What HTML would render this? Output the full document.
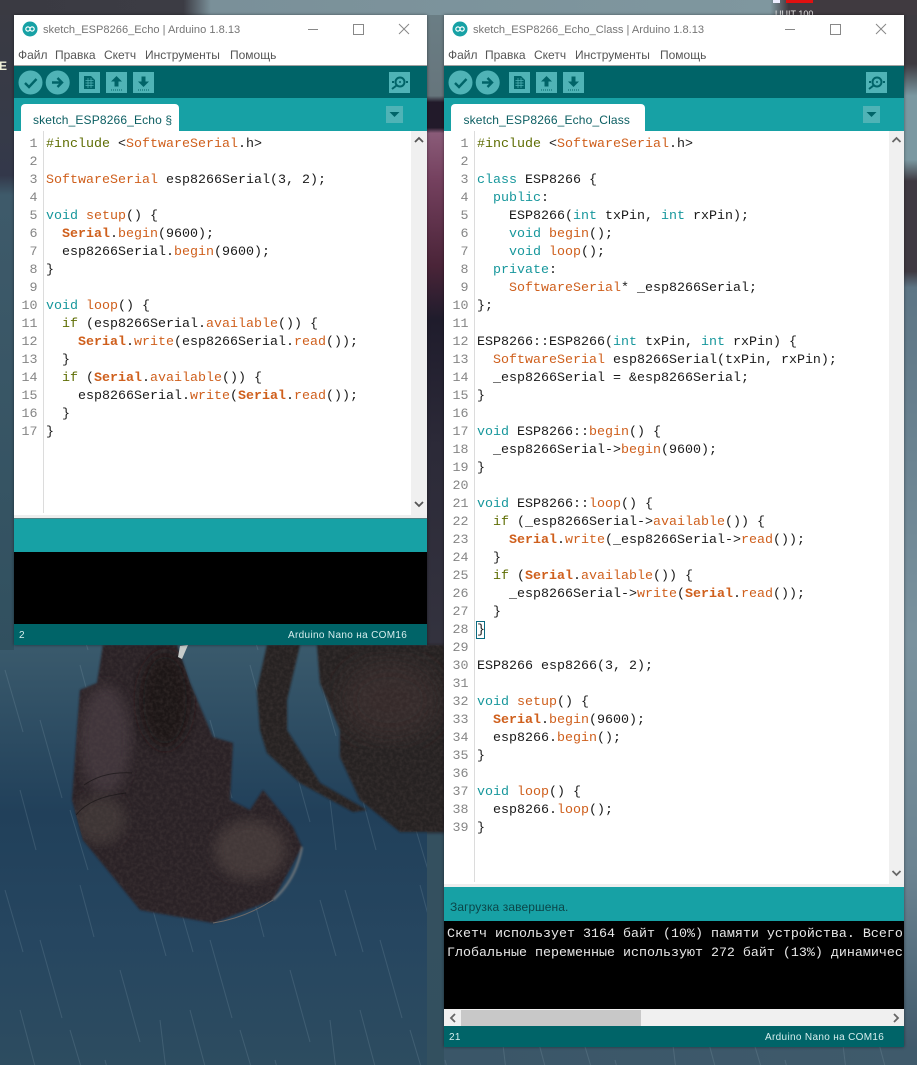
<!DOCTYPE html>
<html><head><meta charset="utf-8"><title>Arduino</title>
<style>
html,body{margin:0;padding:0;width:917px;height:1065px;overflow:hidden;background:#3a5264}
#bg{position:absolute;left:0;top:0}
.a{position:absolute}
.win{position:absolute;background:#fff;box-shadow:0 0 3px rgba(0,0,0,.45);overflow:hidden;font-family:"Liberation Sans",sans-serif;filter:blur(.3px)}
.title{position:absolute;top:8px;font-size:11.1px;line-height:14px;color:#757575;white-space:nowrap}
.menu{position:absolute;top:33px;font-size:12px;line-height:14px;color:#555;white-space:nowrap}
.sep{position:absolute;left:0;right:0;top:50px;height:1px;background:#a2a2a2}
.tb{position:absolute;left:0;right:0;top:51px;height:33px;background:#006468}
.tabbar{position:absolute;left:0;right:0;top:83px;height:33px;background:#17a1a5}
.tab{position:absolute;top:89px;height:27px;background:#fff;border-radius:4px 4px 0 0}
.tabt{position:absolute;top:98px;font-size:12px;line-height:14px;color:#0b5e62;white-space:nowrap;letter-spacing:.15px}
pre{position:absolute;margin:0;font-family:"Liberation Mono",monospace;font-size:13.33px;line-height:18px;color:#1a1a1a;white-space:pre}
.num{color:#858585;text-align:right}
.gut{position:absolute;width:1px;background:#dcdcdc;top:116px}
.sb{position:absolute;top:116px;background:#f0f0f0}
.o{color:#cf5f1c}.t{color:#17979c}.g{color:#5e6d03}.b{color:#cf5f1c;font-weight:bold}
.st{position:absolute;font-size:10px;line-height:12px;color:#d6eeee;letter-spacing:.33px;white-space:nowrap}
svg{position:absolute;overflow:visible}
</style></head><body>
<svg id="bg" width="917" height="1065" viewBox="0 0 917 1065">
<defs>
<linearGradient id="mid" x1="0" y1="0" x2="0" y2="1">
<stop offset="0" stop-color="#6b7f86"/><stop offset=".09" stop-color="#66757c"/><stop offset=".096" stop-color="#221a2a"/><stop offset=".12" stop-color="#221a2a"/><stop offset=".125" stop-color="#8a5b78"/><stop offset=".17" stop-color="#74405e"/><stop offset=".25" stop-color="#4a2438"/><stop offset=".3" stop-color="#1f1c2c"/><stop offset=".42" stop-color="#2c2a38"/><stop offset=".6" stop-color="#33323e"/><stop offset=".775" stop-color="#23242f"/><stop offset=".785" stop-color="#34505f"/><stop offset="1" stop-color="#33505f"/>
</linearGradient>
<linearGradient id="leftS" x1="0" y1="0" x2="0" y2="1">
<stop offset="0" stop-color="#3a3a42"/><stop offset=".2" stop-color="#363a48"/><stop offset=".27" stop-color="#33384a"/><stop offset=".3" stop-color="#3e5a6a"/><stop offset="1" stop-color="#31505f"/>
</linearGradient>
<linearGradient id="rightS" x1="0" y1="0" x2="0" y2="1">
<stop offset="0" stop-color="#3d3a40"/><stop offset=".06" stop-color="#3d3a40"/><stop offset=".09" stop-color="#7b98a1"/><stop offset=".15" stop-color="#7b98a1"/><stop offset=".17" stop-color="#3f3a42"/><stop offset=".255" stop-color="#3f3a42"/><stop offset=".27" stop-color="#5d7585"/><stop offset=".6" stop-color="#7a929e"/><stop offset=".82" stop-color="#6b8391"/><stop offset="1" stop-color="#3c5567"/>
</linearGradient>
<linearGradient id="top" x1="0" y1="0" x2="1" y2="0">
<stop offset="0" stop-color="#3a3a42"/><stop offset=".2" stop-color="#3c3c44"/><stop offset=".23" stop-color="#7a9099"/><stop offset=".84" stop-color="#7f979f"/><stop offset=".86" stop-color="#403a40"/><stop offset="1" stop-color="#403a40"/>
</linearGradient>
<linearGradient id="sea" x1="0" y1="0" x2="0" y2="1">
<stop offset="0" stop-color="#3a5a6c"/><stop offset=".4" stop-color="#21405a"/><stop offset=".7" stop-color="#264660"/><stop offset="1" stop-color="#2d4c60"/>
</linearGradient>
<linearGradient id="botR" x1="0" y1="0" x2="1" y2="0">
<stop offset="0" stop-color="#3a5668"/><stop offset="1" stop-color="#3f5a6b"/>
</linearGradient>
<pattern id="rain" width="170" height="220" patternUnits="userSpaceOnUse">
<g stroke="#a9c3cf" stroke-opacity=".16" stroke-width="1" fill="none">
<path d="M5 10l18 62M40 60l22 78M80 5l14 52M120 90l20 72M150 20l16 56M20 130l16 60M70 150l18 60M105 180l10 38M160 140l6 50"/>
</g>
</pattern>
<filter id="bl"><feGaussianBlur stdDeviation="1"/></filter>
<filter id="bl6"><feGaussianBlur stdDeviation="6"/></filter>
<filter id="bl12"><feGaussianBlur stdDeviation="12"/></filter>
<filter id="grain" x="0" y="0" width="100%" height="100%" color-interpolation-filters="sRGB"><feTurbulence type="fractalNoise" baseFrequency=".3" numOctaves="2" seed="3"/><feColorMatrix values="0 0 0 0 .36 0 0 0 0 .31 0 0 0 0 .3 0 0 0 .55 -.2"/></filter>
<clipPath id="cr"><path d="M103 645L97 683 80 690 72 800 83 840 140 910 213 923 273 900 302 847 293 827 263 790 250 810 230 800 233 743 213 737 190 683 177 645Z"/><path d="M267 645L257 690 260 730 267 753 300 783 353 812 367 810 320 783 287 730 287 700 300 645Z"/><path d="M317 645L320 683 340 730 340 757 360 800 400 832 444 832 444 645Z"/></clipPath>
</defs>
<rect x="0" y="645" width="444" height="420" fill="url(#sea)"/>
<rect x="0" y="645" width="444" height="420" fill="url(#rain)"/>
<rect x="427" y="0" width="17" height="1065" fill="url(#mid)"/>
<rect x="0" y="0" width="14" height="650" fill="url(#leftS)"/>
<rect x="904" y="0" width="13" height="1065" fill="url(#rightS)"/>
<rect x="0" y="0" width="917" height="15" fill="url(#top)"/>
<rect x="444" y="1047" width="473" height="18" fill="url(#botR)"/>
<rect x="444" y="1047" width="473" height="18" fill="url(#rain)"/>
<g filter="url(#bl)">
<path d="M103 645L97 683 80 690 72 800 83 840 140 910 213 923 273 900 302 847 293 827 263 790 250 810 230 800 233 743 213 737 190 683 177 645Z" fill="#2a2427"/>
<path d="M267 645L257 690 260 730 267 753 300 783 353 812 367 810 320 783 287 730 287 700 300 645Z" fill="#272123"/>
<path d="M317 645L320 683 340 730 340 757 360 800 400 832 444 832 444 645Z" fill="#272023"/>
</g>
<g clip-path="url(#cr)">
<ellipse cx="105" cy="740" rx="26" ry="55" fill="#40363a" filter="url(#bl6)"/>
<ellipse cx="100" cy="820" rx="26" ry="24" fill="#3e3436" filter="url(#bl6)"/>
<ellipse cx="250" cy="850" rx="36" ry="30" fill="#423838" filter="url(#bl6)"/>
<ellipse cx="165" cy="700" rx="26" ry="48" fill="#1b1617" filter="url(#bl6)"/>
<ellipse cx="390" cy="700" rx="50" ry="40" fill="#362c2c" filter="url(#bl12)"/>
<rect x="60" y="645" width="384" height="290" filter="url(#grain)"/>
<path d="M84 785q20-14 48-12M76 815q14-18 50-22" fill="none" stroke="#141012" stroke-opacity=".6" stroke-width="1"/>
</g>
<path d="M273 900Q296 880 302 847" fill="none" stroke="#8e8a86" stroke-width="1.5" filter="url(#bl)"/>
<path d="M213 923Q245 918 273 900" fill="none" stroke="#6f6a68" stroke-width="1"/>
<path d="M180 646l8 -1-6 14-4-2z" fill="#c7ccca"/>
<rect x="773" y="0" width="7" height="3" fill="#eef"/><rect x="786" y="0" width="27" height="3" fill="#e01010"/>
<text x="775" y="17" font-family="Liberation Sans" font-size="9" fill="#e6e6e6">UUIT 100</text>
<text x="-1" y="70" font-family="Liberation Sans" font-size="12" font-weight="bold" fill="#f0f0d8">E</text>
</svg>

<!-- LEFT WINDOW -->
<div class="win" style="left:14px;top:15px;width:413px;height:630px">
 <svg style="left:8px;top:6px" width="16" height="16" viewBox="0 0 16 16"><circle cx="8" cy="8" r="7.5" fill="#17a1a5"/><path d="M3.8 8a2 2 0 0 1 4.2 0a2 2 0 0 0 4.2 0a2 2 0 0 0-4.2 0a2 2 0 0 1-4.2 0" fill="none" stroke="#fff" stroke-width="1.2"/></svg>
 <div class="title" style="left:29px">sketch_ESP8266_Echo | Arduino 1.8.13</div>
 <svg style="left:0;top:0" width="413" height="40"><path d="M294 14.5h10" stroke="#888" fill="none"/><rect x="339.5" y="9.5" width="10" height="10" fill="none" stroke="#888"/><path d="M385 9l10 10M395 9l-10 10" stroke="#888" fill="none"/></svg>
 <div class="menu" style="left:4px">Файл</div><div class="menu" style="left:41px">Правка</div><div class="menu" style="left:90px">Скетч</div><div class="menu" style="left:131px">Инструменты</div><div class="menu" style="left:216px">Помощь</div>
 <div class="sep"></div><div class="tb"></div><div class="tabbar"></div>
 <svg style="left:0;top:51px" width="413" height="33">
  <circle cx="16.5" cy="16.5" r="12" fill="#4fb3b6"/><path d="M11 17l4 4 7.5-8" fill="none" stroke="#006468" stroke-width="2.4"/>
  <circle cx="43.7" cy="16.5" r="12" fill="#4fb3b6"/><path d="M38 16.5h9M43.5 12l4.5 4.5-4.5 4.5" fill="none" stroke="#006468" stroke-width="2.4"/>
  <rect x="65" y="6" width="21" height="21" fill="#4fb3b6"/><path d="M70 10h7l4 4v9H70z" fill="#006468"/><path d="M71.5 14.5h8M71.5 17h8M71.5 19.5h8M74 12v10M77 12v10" stroke="#4fb3b6" stroke-width=".7"/>
  <rect x="92" y="6" width="21" height="21" fill="#4fb3b6"/><path d="M102.5 10l5.5 5.5h-3.5v5h-4v-5H97z" fill="#006468"/><path d="M97 24h11" stroke="#006468" stroke-dasharray="1 1"/>
  <rect x="119" y="6" width="21" height="21" fill="#4fb3b6"/><path d="M129.5 21l5.5-5.5h-3.5v-5h-4v5H124z" fill="#006468"/><path d="M124 24h11" stroke="#006468" stroke-dasharray="1 1"/>
  <rect x="375" y="6" width="21" height="21" fill="#4fb3b6"/><circle cx="386" cy="16" r="4.5" fill="none" stroke="#006468" stroke-width="2"/><path d="M382.5 19.5l-4.5 3.5M378 16h2M392 16h2" stroke="#006468" stroke-width="2"/><circle cx="386" cy="16" r="1" fill="#006468"/>
 </svg>
 <div class="tab" style="left:7px;width:158px"></div>
 <div class="tabt" style="left:19px">sketch_ESP8266_Echo §</div>
 <svg style="left:372px;top:91px" width="17" height="17"><rect width="17" height="17" fill="#4fb3b6"/><path d="M3.5 6h10l-5 5z" fill="#006468"/></svg>
 <div class="gut" style="left:29px;height:382px"></div>
 <pre class="num" style="left:0;width:23.5px;top:121px">1
2
3
4
5
6
7
8
9
10
11
12
13
14
15
16
17</pre>
<pre style="left:32px;top:121px"><span class="g">#include</span> &lt;<span class="o">SoftwareSerial</span>.h&gt;

<span class="o">SoftwareSerial</span> esp8266Serial(3, 2);

<span class="t">void</span> <span class="o">setup</span>() {
  <span class="b">Serial</span>.<span class="o">begin</span>(9600);
  esp8266Serial.<span class="o">begin</span>(9600);
}

<span class="t">void</span> <span class="o">loop</span>() {
  <span class="g">if</span> (esp8266Serial.<span class="o">available</span>()) {
    <span class="b">Serial</span>.<span class="o">write</span>(esp8266Serial.<span class="o">read</span>());
  }
  <span class="g">if</span> (<span class="b">Serial</span>.<span class="o">available</span>()) {
    esp8266Serial.<span class="o">write</span>(<span class="b">Serial</span>.<span class="o">read</span>());
  }
}</pre>
 <div class="sb" style="left:397px;width:16px;height:384px"></div>
 <svg style="left:397px;top:116px" width="16" height="384"><path d="M4 11l4-4 4 4" fill="none" stroke="#555" stroke-width="1.8"/><path d="M4 371l4 4 4-4" fill="none" stroke="#555" stroke-width="1.8"/></svg>
 <div class="a" style="left:0;right:0;top:500px;height:3px;background:#eeeeee"></div>
 <div class="a" style="left:0;right:0;top:503px;height:1px;background:#4f8184"></div>
 <div class="a" style="left:0;right:0;top:504px;height:33px;background:#17a1a5"></div>
 <div class="a" style="left:0;right:0;top:537px;height:72px;background:#000"></div>
 <div class="a" style="left:0;right:0;top:609px;height:21px;background:#006468"></div>
 <div class="st" style="left:5px;top:615px">2</div>
 <div class="st" style="left:274px;top:615px">Arduino Nano на COM16</div>
</div>

<!-- RIGHT WINDOW -->
<div class="win" style="left:444px;top:15px;width:460px;height:1032px">
 <svg style="left:8px;top:6px" width="16" height="16" viewBox="0 0 16 16"><circle cx="8" cy="8" r="7.5" fill="#17a1a5"/><path d="M3.8 8a2 2 0 0 1 4.2 0a2 2 0 0 0 4.2 0a2 2 0 0 0-4.2 0a2 2 0 0 1-4.2 0" fill="none" stroke="#fff" stroke-width="1.2"/></svg>
 <div class="title" style="left:29px">sketch_ESP8266_Echo_Class | Arduino 1.8.13</div>
 <svg style="left:0;top:0" width="460" height="40"><path d="M341 14.5h10" stroke="#888" fill="none"/><rect x="386.5" y="9.5" width="10" height="10" fill="none" stroke="#888"/><path d="M432 9l10 10M442 9l-10 10" stroke="#888" fill="none"/></svg>
 <div class="menu" style="left:4px">Файл</div><div class="menu" style="left:41px">Правка</div><div class="menu" style="left:90px">Скетч</div><div class="menu" style="left:131px">Инструменты</div><div class="menu" style="left:216px">Помощь</div>
 <div class="sep"></div><div class="tb"></div><div class="tabbar"></div>
 <svg style="left:0;top:51px" width="460" height="33">
  <circle cx="16.5" cy="16.5" r="12" fill="#4fb3b6"/><path d="M11 17l4 4 7.5-8" fill="none" stroke="#006468" stroke-width="2.4"/>
  <circle cx="43.7" cy="16.5" r="12" fill="#4fb3b6"/><path d="M38 16.5h9M43.5 12l4.5 4.5-4.5 4.5" fill="none" stroke="#006468" stroke-width="2.4"/>
  <rect x="65" y="6" width="21" height="21" fill="#4fb3b6"/><path d="M70 10h7l4 4v9H70z" fill="#006468"/><path d="M71.5 14.5h8M71.5 17h8M71.5 19.5h8M74 12v10M77 12v10" stroke="#4fb3b6" stroke-width=".7"/>
  <rect x="92" y="6" width="21" height="21" fill="#4fb3b6"/><path d="M102.5 10l5.5 5.5h-3.5v5h-4v-5H97z" fill="#006468"/><path d="M97 24h11" stroke="#006468" stroke-dasharray="1 1"/>
  <rect x="119" y="6" width="21" height="21" fill="#4fb3b6"/><path d="M129.5 21l5.5-5.5h-3.5v-5h-4v5H124z" fill="#006468"/><path d="M124 24h11" stroke="#006468" stroke-dasharray="1 1"/>
  <rect x="422" y="6" width="21" height="21" fill="#4fb3b6"/><circle cx="433" cy="16" r="4.5" fill="none" stroke="#006468" stroke-width="2"/><path d="M429.5 19.5l-4.5 3.5M425 16h2M439 16h2" stroke="#006468" stroke-width="2"/><circle cx="433" cy="16" r="1" fill="#006468"/>
 </svg>
 <div class="tab" style="left:7px;width:194px"></div>
 <div class="tabt" style="left:19.5px">sketch_ESP8266_Echo_Class</div>
 <svg style="left:419px;top:91px" width="17" height="17"><rect width="17" height="17" fill="#4fb3b6"/><path d="M3.5 6h10l-5 5z" fill="#006468"/></svg>
 <div class="gut" style="left:30px;height:751px"></div>
 <pre class="num" style="left:0;width:24.5px;top:121px">1
2
3
4
5
6
7
8
9
10
11
12
13
14
15
16
17
18
19
20
21
22
23
24
25
26
27
28
29
30
31
32
33
34
35
36
37
38
39</pre>
<div class="a" style="left:32px;top:606px;width:7px;height:16px;border:1px solid #0a6a80"></div>
<pre style="left:33px;top:121px"><span class="g">#include</span> &lt;<span class="o">SoftwareSerial</span>.h&gt;

<span class="t">class</span> ESP8266 {
  <span class="t">public</span>:
    ESP8266(<span class="t">int</span> txPin, <span class="t">int</span> rxPin);
    <span class="t">void</span> <span class="o">begin</span>();
    <span class="t">void</span> <span class="o">loop</span>();
  <span class="t">private</span>:
    <span class="o">SoftwareSerial</span>* _esp8266Serial;
};

ESP8266::ESP8266(<span class="t">int</span> txPin, <span class="t">int</span> rxPin) {
  <span class="o">SoftwareSerial</span> esp8266Serial(txPin, rxPin);
  _esp8266Serial = &amp;esp8266Serial;
}

<span class="t">void</span> ESP8266::<span class="o">begin</span>() {
  _esp8266Serial-&gt;<span class="o">begin</span>(9600);
}

<span class="t">void</span> ESP8266::<span class="o">loop</span>() {
  <span class="g">if</span> (_esp8266Serial-&gt;<span class="o">available</span>()) {
    <span class="b">Serial</span>.<span class="o">write</span>(_esp8266Serial-&gt;<span class="o">read</span>());
  }
  <span class="g">if</span> (<span class="b">Serial</span>.<span class="o">available</span>()) {
    _esp8266Serial-&gt;<span class="o">write</span>(<span class="b">Serial</span>.<span class="o">read</span>());
  }
}

ESP8266 esp8266(3, 2);

<span class="t">void</span> <span class="o">setup</span>() {
  <span class="b">Serial</span>.<span class="o">begin</span>(9600);
  esp8266.<span class="o">begin</span>();
}

<span class="t">void</span> <span class="o">loop</span>() {
  esp8266.<span class="o">loop</span>();
}</pre>
 <div class="sb" style="left:445px;width:15px;height:753px"></div>
 <svg style="left:445px;top:116px" width="15" height="753"><path d="M3.5 11l4-4 4 4" fill="none" stroke="#666" stroke-width="1.8"/><path d="M3.5 740l4 4 4-4" fill="none" stroke="#666" stroke-width="1.8"/></svg>
 <div class="a" style="left:0;right:0;top:869px;height:3px;background:#eeeeee"></div>
 <div class="a" style="left:0;right:0;top:872px;height:34px;background:#17a1a5"></div>
 <div class="a" style="left:6px;top:885px;font-size:12px;line-height:14px;color:#0b4649;white-space:nowrap;letter-spacing:.1px">Загрузка завершена.</div>
 <div class="a" style="left:0;right:0;top:906px;height:88px;background:#000"></div>
 <pre style="left:3px;top:910px;line-height:19px;color:#e8e8e8;width:457px;overflow:hidden">Скетч использует 3164 байт (10%) памяти устройства. Всего
Глобальные переменные используют 272 байт (13%) динамичес</pre>
 <div class="a" style="left:0;right:0;top:994px;height:17px;background:#f0f0f0"></div>
 <div class="a" style="left:17px;top:995px;width:180px;height:16px;background:#c8c8c8"></div>
 <svg style="left:0;top:994px" width="460" height="17"><path d="M11 5l-4 4 4 4" fill="none" stroke="#666" stroke-width="1.8"/><path d="M450 5l4 4-4 4" fill="none" stroke="#666" stroke-width="1.8"/></svg>
 <div class="a" style="left:0;right:0;top:1011px;height:21px;background:#006468"></div>
 <div class="st" style="left:5px;top:1017px">21</div>
 <div class="st" style="left:321px;top:1017px">Arduino Nano на COM16</div>
</div>
</body></html>
